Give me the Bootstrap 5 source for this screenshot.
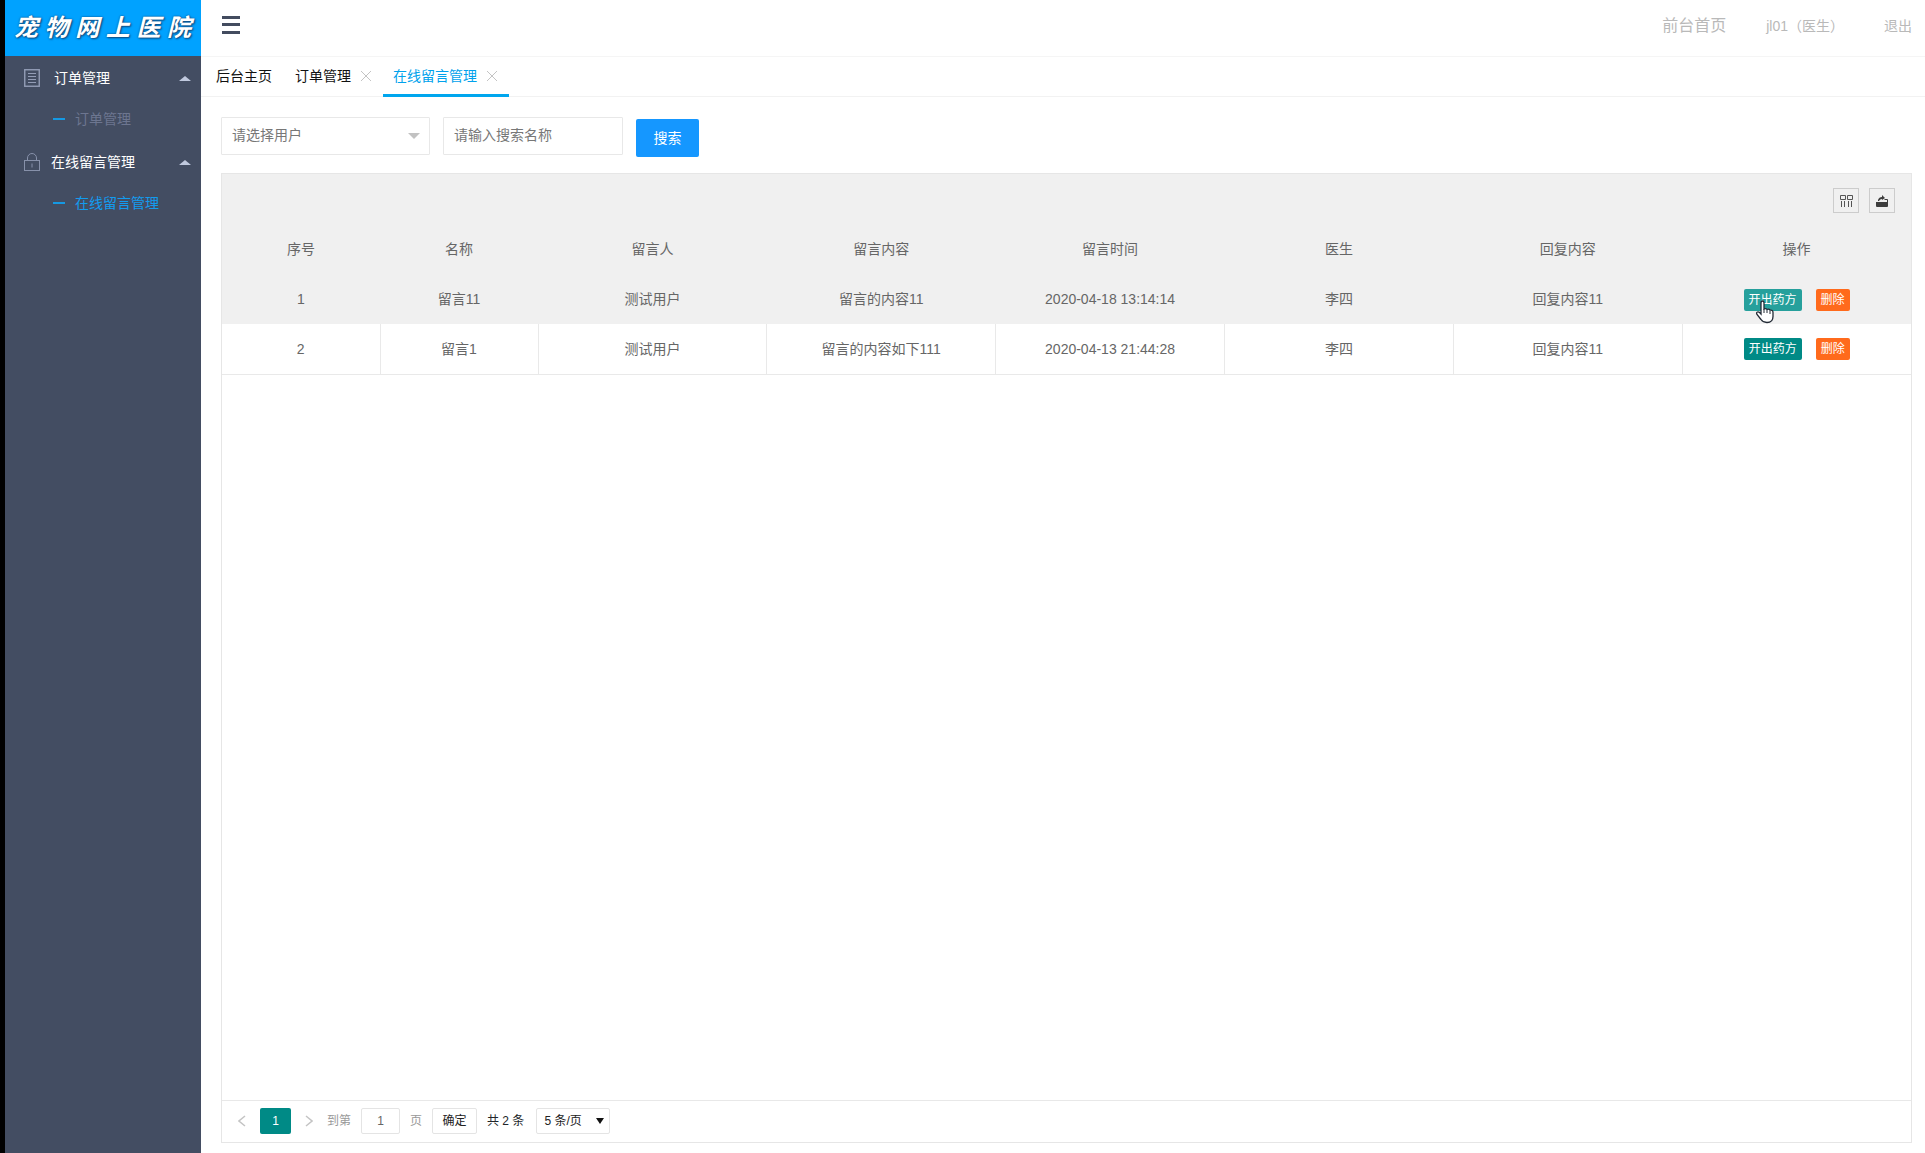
<!DOCTYPE html>
<html lang="zh-CN">
<head>
<meta charset="utf-8">
<meta name="viewport" content="width=device-width, initial-scale=1">
<title>宠物网上医院</title>
<link href="https://cdn.jsdelivr.net/npm/bootstrap@5.3.0/dist/css/bootstrap.min.css" rel="stylesheet">
<style>
body{font:14px/20px "Liberation Sans","Noto Sans CJK SC",sans-serif;color:#666;background:#fff;border-left:5px solid #000}
a{text-decoration:none}
.side{width:196px;background:#434d62}
.brand{height:56px;background:#00a2ff;color:#fff;padding:0 10px 0 9px;font-size:24px;font-weight:700;font-style:italic;line-height:56px;text-shadow:0 0 2px #10487c,1px 1px 2px #10487c}
.side-head{height:44px;color:#fff;padding:0 10px 0 19px}
.side-head svg{margin-right:14px}
.side-head.near svg{margin-right:11px}
.tri{border:6px solid transparent;border-top:0;border-bottom:5px solid #c0c9de}
.side-sub{height:40px;padding:0 0 2px 48px;color:#6d7690}
.side-sub.current{color:#129cf0}
.side-sub::before{content:"";width:12px;height:2px;background:#1599e3;margin-right:10px}
.top{height:57px;border-bottom:1px solid #f5f5f5;padding:0 13px 4px 20px}
.top a{color:#b9b9b9}
.top .home{font-size:16px}
.menu-btn{width:20px;height:20px}
.tabs{height:40px;border-bottom:1px solid #f2f2f2;padding-left:5px}
.tabs a{color:#111;padding:0 10px 2px;height:40px;gap:10px}
.tabs .first{padding-right:13px}
.tabs .closable{padding-right:12px}
.tabs .current{color:#00a2ec;border-bottom:3px solid #00a6ee;padding-top:1px;padding-bottom:0}
.work{padding:20px 13px 10px 20px}
.filters{gap:13px;margin-bottom:16px}
.filters .form-select,.filters .form-control{height:38px;border:1px solid #e8e8e8;border-radius:1px;font-size:14px;line-height:20px;padding:7px 10px 9px;color:#777;background-color:#fff}
.filters .form-select{width:209px;background-image:none}
.filters .form-control{width:180px}
.filters .form-control::placeholder{color:#777}
.pick .tri-down{right:10px;top:16px;border:6px solid transparent;border-bottom:0;border-top:6px solid #c2c2c2;pointer-events:none}
.go{height:38px;width:63px;margin-top:2px;padding:0;background:#1597ff;color:#fff;border:0;border-radius:2px;font-size:14px}
.panel{border:1px solid #e6e6e6}
.tools{height:50px;background:#f0f0f0;gap:10px;padding:14px 16px 0}
.tools button{width:26px;height:25px;border:1px solid #ccc;background:transparent;padding:0}
.grid{table-layout:fixed;margin:0;color:#666}
.grid th,.grid td{height:50px;padding:0 8px;text-align:center;vertical-align:middle;font-weight:400;color:#666;border:0}
.grid thead th,.grid .hover td{background:#f0f0f0}
.grid tbody tr+tr td{border:solid #e9e9e9;border-width:0 1px 1px 0}
.grid tbody tr+tr td:last-child{border-right:0}
.w-s{width:158px}
.acts{gap:14px;padding-top:1px}
.acts button{height:22px;padding:0 5px;border:0;border-radius:2px;font-size:12px;line-height:22px;color:#fff}
.rx{background:#008a86}
.hover .rx{background:#26a09c}
.del{background:#ff6a1c}
.hand{left:11px;top:11px;pointer-events:none}
.pager{height:42px;border-top:1px solid #e8e8e8;font-size:12px;padding:0 14px 2px;color:#999}
.pager button,.pager input,.pager select{height:26px;border:1px solid #e4e4e4;border-radius:2px;background:#fff;padding:0;font-size:12px;color:#222}
.pager .arrow{width:12px;border:0;line-height:1}
.pager .num{width:31px;background:#008a86;color:#fff;border:0;margin:0 12px}
.pager input{width:39px;text-align:center;color:#666;margin:0 10px}
.pager .ok{width:45px;margin:0 10px}
.pager select{width:74px;padding:0 7px;appearance:none}
.pager .mark-down{right:6px;top:10px;border:4px solid transparent;border-bottom:0;border-top:6px solid #111;pointer-events:none}
</style>
<script src="https://cdn.jsdelivr.net/npm/bootstrap@5.3.0/dist/js/bootstrap.bundle.min.js"></script>
</head>
<body>
<div class="d-flex min-vh-100">
  <aside class="side flex-shrink-0">
    <div class="brand d-flex justify-content-between"><span>宠</span><span>物</span><span>网</span><span>上</span><span>医</span><span>院</span></div>
    <nav>
      <a href="#" class="side-head d-flex align-items-center">
        <svg width="16" height="18" viewBox="0 0 16 18" fill="none" stroke="#939db6"><rect x=".75" y=".75" width="14.5" height="16.5" stroke-width="1.4"/><path d="M4 4.500h8M4 7.500h8M4 10.500h8M4 13.500h8"/></svg>
        <span>订单管理</span><span class="tri ms-auto"></span>
      </a>
      <a href="#" class="side-sub d-flex align-items-center">订单管理</a>
      <a href="#" class="side-head near d-flex align-items-center">
        <svg width="16" height="18" viewBox="0 0 16 18" fill="none" stroke="#8791aa"><rect x=".5" y="7.5" width="15" height="10"/><path d="M3.500 7.500V5a4.500 4.500 0 0 1 9 0v2.500M8 10.500v4"/></svg>
        <span>在线留言管理</span><span class="tri ms-auto"></span>
      </a>
      <a href="#" class="side-sub current d-flex align-items-center">在线留言管理</a>
    </nav>
  </aside>
  <main class="flex-grow-1 d-flex flex-column">
    <header class="top d-flex align-items-center">
      <button class="menu-btn border-0 bg-transparent p-0 d-flex" aria-label="菜单"><svg width="20" height="20" fill="#434c5f"><path d="M1 0h18v3H1zM1 7h18v3H1zM1 15h18v3H1z"/></svg></button>
      <a href="#" class="home ms-auto">前台首页</a>
      <a href="#" class="px-4 mx-3">jl01（医生）</a>
      <a href="#">退出</a>
    </header>
    <nav class="tabs d-flex">
      <a href="#" class="first d-flex align-items-center">后台主页</a>
      <a href="#" class="closable d-flex align-items-center">订单管理<svg width="10" height="10" stroke="#c4c4c4"><path d="M0 0l10 10M10 0L0 10"/></svg></a>
      <a href="#" class="closable current d-flex align-items-center">在线留言管理<svg width="10" height="10" stroke="#c4c4c4"><path d="M0 0l10 10M10 0L0 10"/></svg></a>
    </nav>
    <div class="work flex-grow-1 d-flex flex-column">
      <form class="filters d-flex align-items-start">
        <div class="pick position-relative"><select class="form-select" aria-label="用户"><option>请选择用户</option></select><span class="tri-down position-absolute"></span></div>
        <input class="form-control" type="text" placeholder="请输入搜索名称" aria-label="搜索名称">
        <button class="btn go" type="button">搜索</button>
      </form>
      <section class="panel flex-grow-1 d-flex flex-column">
        <div class="tools d-flex justify-content-end">
          <button class="d-flex align-items-center justify-content-center" aria-label="筛选列"><svg width="14" height="14" fill="none" stroke="#555"><path d="M1.500 1.500h5v4h-5zM8.500 1.500h5v4h-5zM2.500 7V13M5.500 7V13M9.500 7V13M12.500 7V13"/></svg></button>
          <button class="d-flex align-items-center justify-content-center" aria-label="导出"><svg width="14" height="14" fill="#3d3d3d"><path d="M1 8h12v4q0 1-1 1H2q-1 0-1-1z"/><path d="M3 7V6q1-3 4-3V1l3 3-3 2V5Q5 5 4 7z"/><path d="M9.500 5.500h3V8" fill="none" stroke="#3d3d3d"/></svg></button>
        </div>
        <table class="table grid">
          <colgroup><col class="w-s"><col class="w-s"><col><col><col><col><col><col></colgroup>
          <thead><tr><th>序号</th><th>名称</th><th>留言人</th><th>留言内容</th><th>留言时间</th><th>医生</th><th>回复内容</th><th>操作</th></tr></thead>
          <tbody>
            <tr class="hover"><td>1</td><td>留言11</td><td>测试用户</td><td>留言的内容11</td><td>2020-04-18 13:14:14</td><td>李四</td><td>回复内容11</td>
              <td><div class="acts d-flex justify-content-center"><div class="position-relative d-flex"><button class="rx">开出药方</button><svg class="hand position-absolute" width="20" height="24" viewBox="0 0 20 24"><path d="M6 14V3q0-2 1.500-2T9 3v6q2-1 3 .5 2-1 3 .7 3-.5 3 2.300v4q0 6-6 6-4 0-6-3l-4-5q-1-2 .5-2.500T6 14z" fill="#fff" stroke="#222a35" stroke-width="1.300"/><path d="M9 9v4M12 10v3M15 11v3" stroke="#222a35" fill="none"/></svg></div><button class="del">删除</button></div></td></tr>
            <tr><td>2</td><td>留言1</td><td>测试用户</td><td>留言的内容如下111</td><td>2020-04-13 21:44:28</td><td>李四</td><td>回复内容11</td>
              <td><div class="acts d-flex justify-content-center"><button class="rx">开出药方</button><button class="del">删除</button></div></td></tr>
          </tbody>
        </table>
        <div class="pager d-flex align-items-center mt-auto">
          <button class="arrow" aria-label="上一页"><svg width="8" height="12" fill="none" stroke="#c4c4c4" stroke-width="1.500"><path d="M7 1L1 6l6 5"/></svg></button>
          <button class="num">1</button>
          <button class="arrow me-2" aria-label="下一页"><svg width="8" height="12" fill="none" stroke="#c4c4c4" stroke-width="1.500"><path d="M1 1l6 5-6 5"/></svg></button>
          <label for="pg" class="ms-1">到第</label><input id="pg" type="text" value="1"><span>页</span>
          <button class="ok">确定</button>
          <span class="text-dark me-2 pe-1">共 2 条</span>
          <div class="position-relative"><select aria-label="每页条数"><option>5 条/页</option></select><span class="mark-down position-absolute"></span></div>
        </div>
      </section>
    </div>
  </main>
</div>
</body>
</html>
